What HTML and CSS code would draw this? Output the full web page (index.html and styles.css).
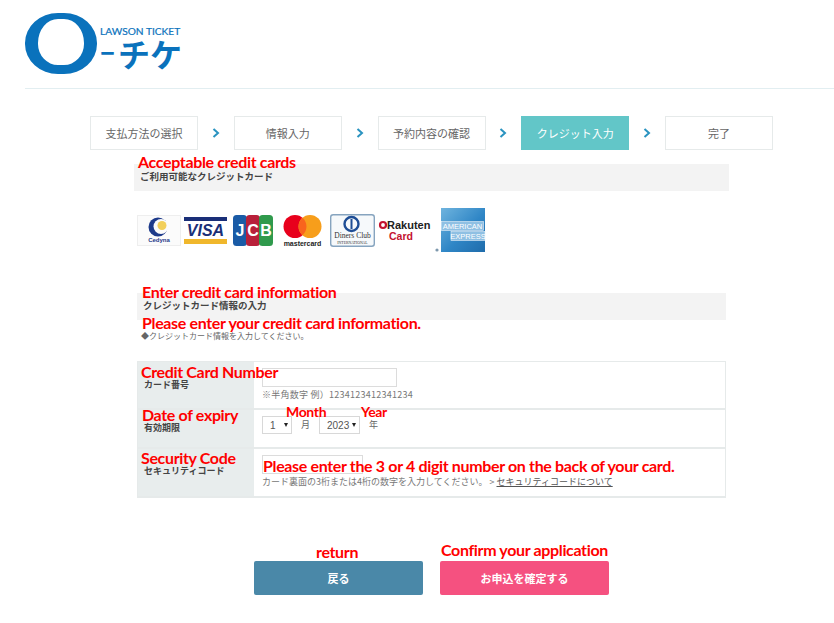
FILE: index.html
```html
<!DOCTYPE html>
<html>
<head>
  <meta charset="utf-8">
  <title>クレジット入力</title>
  <link rel="stylesheet" href="styles.css">
</head>
<body>
  <header class="header">
    <div class="logo">
      <div class="logo-ring"></div>
      <div class="logo-words">
        <div class="logo-en">LAWSON TICKET</div>
        <div class="logo-jp"><span class="logo-dash">ー</span>チケ</div>
      </div>
    </div>
  </header>

  <ol class="steps">
    <li class="step">支払方法の選択</li>
    <li class="arrow"><svg width="8" height="10" viewBox="0 0 8 10"><polyline points="1.5,1 6,5 1.5,9" /></svg></li>
    <li class="step">情報入力</li>
    <li class="arrow"><svg width="8" height="10" viewBox="0 0 8 10"><polyline points="1.5,1 6,5 1.5,9" /></svg></li>
    <li class="step">予約内容の確認</li>
    <li class="arrow"><svg width="8" height="10" viewBox="0 0 8 10"><polyline points="1.5,1 6,5 1.5,9" /></svg></li>
    <li class="step active">クレジット入力</li>
    <li class="arrow"><svg width="8" height="10" viewBox="0 0 8 10"><polyline points="1.5,1 6,5 1.5,9" /></svg></li>
    <li class="step">完了</li>
  </ol>

  <main class="content">
    <h2 class="bar bar-wide">ご利用可能なクレジットカード</h2>

    <svg class="cards" width="350" height="46" viewBox="0 0 350 46">
      <defs>
        <linearGradient id="amexFill" x1="0" y1="0" x2="1" y2="1">
          <stop offset="0" stop-color="#6fb4de" />
          <stop offset="0.55" stop-color="#2f86c6" />
          <stop offset="1" stop-color="#1f6cab" />
        </linearGradient>
      </defs>
      <!-- Cedyna -->
      <rect x="0.5" y="7.5" width="43" height="30" fill="#fbfbfb" stroke="#eeeeee" />
      <circle cx="21" cy="19" r="9.5" fill="#1d3a8a" />
      <circle cx="24" cy="18.5" r="7.5" fill="#fbfbfb" />
      <circle cx="25" cy="17.5" r="4.5" fill="#f2cf5a" />
      <text x="22" y="34" class="c-cedyna">Cedyna</text>
      <!-- VISA -->
      <rect x="47" y="9" width="43" height="4" fill="#1a2f78" />
      <rect x="47" y="31" width="43" height="5" fill="#f0b72c" />
      <text x="68.5" y="28" class="c-visa">VISA</text>
      <!-- JCB -->
      <rect x="96" y="7" width="14" height="31" rx="3.5" fill="#1a5ba6" />
      <rect x="109" y="7" width="14" height="31" rx="3.5" fill="#b8203a" />
      <rect x="122" y="7" width="14" height="31" rx="3.5" fill="#2f9a4c" />
      <text x="103" y="28" class="c-jcb">J</text>
      <text x="116" y="28" class="c-jcb">C</text>
      <text x="129" y="28" class="c-jcb">B</text>
      <!-- mastercard -->
      <circle cx="158" cy="18.5" r="11.5" fill="#e8001c" />
      <circle cx="173" cy="18.5" r="11.5" fill="#f79e1b" />
      <path d="M165.5 9.8 a11.5 11.5 0 0 1 0 17.4 a11.5 11.5 0 0 1 0 -17.4z" fill="#f9641d" />
      <text x="165.5" y="38" class="c-mc">mastercard</text>
      <!-- Diners -->
      <rect x="193.7" y="6.7" width="43.6" height="31.6" rx="2.5" fill="#f6f9fb" stroke="#86a4bf" stroke-width="1.4" />
      <circle cx="214.5" cy="16" r="7" fill="none" stroke="#1f4e96" stroke-width="2.4" />
      <rect x="213.5" y="11" width="2" height="10" fill="#1f4e96" />
      <text x="215.5" y="30" class="c-diners">Diners Club</text>
      <text x="215.5" y="35.5" class="c-diners-sub">INTERNATIONAL</text>
      <!-- Rakuten -->
      <circle cx="246" cy="17" r="3" fill="none" stroke="#c4122f" stroke-width="2.2" />
      <text x="250" y="21" class="c-rakuten">Rakuten</text>
      <text x="252" y="32" class="c-card">Card</text>
      <!-- AMEX -->
      <rect x="304" y="0" width="44" height="44" fill="url(#amexFill)" />
      <rect x="304.5" y="13.5" width="42" height="9" fill="#8fc0e3" stroke="#e6f1f9" stroke-width="0.6" />
      <rect x="314" y="23.5" width="34" height="9" fill="#8fc0e3" stroke="#e6f1f9" stroke-width="0.6" />
      <text x="325.5" y="21" class="c-amex">AMERICAN</text>
      <text x="331" y="31" class="c-amex">EXPRESS</text>
      <circle cx="300" cy="42" r="1.6" fill="#7d98ad" />
    </svg>

    <h2 class="bar bar-info">クレジットカード情報の入力</h2>
    <p class="lead">◆クレジットカード情報を入力してください。</p>

    <div class="form-table">
      <div class="row row-number">
        <div class="label">カード番号</div>
        <div class="field">
          <input class="input input-number" type="text">
          <div class="hint hint-sample">※半角数字 例）1234123412341234</div>
        </div>
      </div>
      <div class="row row-date">
        <div class="label">有効期限</div>
        <div class="field field-date">
          <span class="pick pick-month"><select><option>1</option></select></span>
          <span class="unit">月</span>
          <span class="pick pick-year"><select><option>2023</option></select></span>
          <span class="unit">年</span>
        </div>
      </div>
      <div class="row row-code">
        <div class="label">セキュリティコード</div>
        <div class="field">
          <input class="input input-code" type="text">
          <div class="hint">カード裏面の3桁または4桁の数字を入力してください。 &gt; <a class="hint-link" href="#">セキュリティコードについて</a></div>
        </div>
      </div>
    </div>
  </main>

  <div class="buttons">
    <button class="btn btn-back">戻る</button>
    <button class="btn btn-confirm">お申込を確定する</button>
  </div>

  <!-- red translation notes painted on top of the page -->
  <div class="note n-accept">Acceptable credit cards</div>
  <div class="note n-enter">Enter credit card information</div>
  <div class="note n-please">Please enter your credit card information.</div>
  <div class="note n-number">Credit Card Number</div>
  <div class="note n-expiry">Date of expiry</div>
  <div class="note n-month">Month</div>
  <div class="note n-year">Year</div>
  <div class="note n-code">Security Code</div>
  <div class="note n-digit">Please enter the 3 or 4 digit number on the back of your card.</div>
  <div class="note n-return">return</div>
  <div class="note n-confirm">Confirm your application</div>
</body>
</html>
```

FILE: styles.css
```css
* {
  box-sizing: border-box;
}
body {
  position: relative;
  margin: 0;
  background-color: #fff;
  color: #555;
  font-family: "Noto Sans CJK JP", "Liberation Sans", sans-serif;
  overflow: hidden;
}

/* header */
.header {
  height: 89px;
  margin-left: 25px;
  padding-top: 13px;
  border-bottom: 1px solid #e2eef1;
}
.logo {
  display: flex;
  color: #0a72bc;
}
.logo-ring {
  width: 72px;
  height: 61px;
  border: solid #0a72bc;
  border-width: 6px 13px 9px;
  border-radius: 33px / 30px;
}
.logo-words {
  margin-left: 3px;
  padding-top: 12px;
}
.logo-en {
  font-family: "Lato", sans-serif;
  font-size: 10.2px;
  font-weight: 400;
  line-height: 12px;
  -webkit-text-stroke: 0.2px #0a72bc;
  white-space: nowrap;
}
.logo-jp {
  display: flex;
  align-items: center;
  font-size: 32px;
  font-weight: 700;
  line-height: 32px;
  white-space: nowrap;
}
.logo-dash {
  width: 15px;
  margin-right: 3px;
  overflow: hidden;
  font-size: 15px;
  font-weight: 900;
}

/* steps */
.steps {
  display: flex;
  align-items: center;
  list-style: none;
  margin: 27px 0 0 90px;
  padding: 0;
}
.step {
  display: flex;
  align-items: center;
  justify-content: center;
  width: 108px;
  height: 34px;
  border: 1px solid #e6eaea;
  color: #666;
  font-size: 11px;
}
.step.active {
  background-color: #62c6c8;
  border-color: #62c6c8;
  color: #fff;
}
.arrow {
  display: flex;
  align-items: center;
  justify-content: center;
  width: 35.75px;
}
.arrow polyline {
  fill: none;
  stroke: #2a93c0;
  stroke-width: 2;
}

/* main */
.content {
  width: 589px;
  margin-left: 137px;
}
.bar {
  height: 27px;
  margin: 0;
  padding: 5px 6px 0;
  background-color: #f3f3f3;
  color: #444;
  font-size: 9.5px;
  font-weight: 700;
  line-height: 14px;
}
.bar-wide {
  width: 595px;
  margin: 14px 0 0 -3px;
}
.cards {
  display: block;
  margin-top: 17px;
}
.c-cedyna, .c-visa, .c-jcb, .c-mc, .c-diners, .c-diners-sub, .c-amex {
  text-anchor: middle;
}
.c-cedyna {
  fill: #1d3a8a;
  font: 700 6px "Liberation Sans", sans-serif;
}
.c-visa {
  fill: #1a2f78;
  font: italic 700 16px "Liberation Sans", sans-serif;
}
.c-jcb {
  fill: #fff;
  font: 700 16px "Liberation Sans", sans-serif;
}
.c-mc {
  fill: #222;
  font: 700 7px "Liberation Sans", sans-serif;
}
.c-diners {
  fill: #333;
  font: 7.5px "Liberation Serif", serif;
}
.c-diners-sub {
  fill: #333;
  font: 3.8px "Liberation Serif", serif;
}
.c-rakuten {
  fill: #222;
  font: 700 11px "Liberation Sans", sans-serif;
}
.c-card {
  fill: #c4122f;
  font: 700 10.5px "Liberation Sans", sans-serif;
}
.c-amex {
  fill: #fff;
  font: 400 7.5px "Liberation Sans", sans-serif;
}
.bar-info {
  margin-top: 39px;
}
.lead {
  margin: 10px 0 0 4px;
  color: #666;
  font-size: 8px;
  line-height: 12px;
}

/* form table */
.form-table {
  margin-top: 19px;
  border: 1px solid #e6eaea;
  border-bottom-width: 2px;
}
.row {
  display: flex;
  border-bottom: 2px solid #e6eaea;
}
.row:last-child {
  border-bottom: 0;
}
.row-number {
  height: 48px;
}
.row-date {
  height: 39px;
}
.row-code {
  height: 47px;
}
.label {
  width: 116px;
  padding: 16px 0 0 6px;
  background-color: #e8eded;
  color: #444;
  font-size: 9px;
  font-weight: 700;
  line-height: 14px;
}
.row-date .label {
  padding-top: 11px;
}
.row-code .label {
  padding-top: 15px;
}
.field {
  padding: 6px 8px 0;
}
.field-date {
  display: flex;
  align-items: flex-start;
}
.input {
  display: block;
  height: 19px;
  padding: 0;
  border: 1px solid #dcdcdc;
  background-color: #fff;
}
.input-number {
  width: 135px;
}
.input-code {
  width: 101px;
}
.hint {
  margin-top: 1px;
  color: #777;
  font-size: 9px;
  line-height: 13px;
  white-space: nowrap;
}
.hint-sample {
  letter-spacing: 0.25px;
}
.hint-link {
  color: #555;
}
.pick {
  position: relative;
  display: block;
  height: 18px;
}
.pick::after {
  content: "";
  position: absolute;
  top: 7px;
  right: 4px;
  border-top: 4px solid #222;
  border-left: 2.5px solid transparent;
  border-right: 2.5px solid transparent;
}
.pick-month {
  width: 30px;
}
.pick-year {
  width: 41px;
}
.pick select {
  display: block;
  width: 100%;
  height: 18px;
  padding: 0 0 0 7px;
  border: 1px solid #d8d8d8;
  border-radius: 0;
  background-color: #fff;
  color: #555;
  font-family: "Liberation Sans", sans-serif;
  font-size: 10px;
  appearance: none;
}
.unit {
  width: 27px;
  color: #666;
  font-size: 9px;
  line-height: 18px;
  text-align: center;
}

/* buttons */
.buttons {
  display: flex;
  gap: 17px;
  margin: 63px 0 0 254px;
}
.btn {
  width: 169px;
  height: 34px;
  border: 0;
  border-radius: 2px;
  color: #fff;
  font-family: inherit;
  font-size: 11px;
  font-weight: 700;
  cursor: pointer;
}
.btn-back {
  background-color: #4a88a8;
}
.btn-confirm {
  background-color: #f55180;
}

/* red translation notes */
.note {
  position: absolute;
  color: #f00;
  font-family: "Lato", sans-serif;
  font-size: 16px;
  font-weight: 700;
  line-height: 18px;
  letter-spacing: -0.35px;
  white-space: nowrap;
}
.n-accept {
  top: 153px;
  left: 138px;
}
.n-enter {
  top: 283px;
  left: 142px;
}
.n-please {
  top: 314px;
  left: 142px;
}
.n-number {
  top: 363px;
  left: 141px;
}
.n-expiry {
  top: 406px;
  left: 142px;
}
.n-month {
  top: 403px;
  left: 286px;
  font-size: 14px;
}
.n-year {
  top: 403px;
  left: 361px;
  font-size: 14px;
}
.n-code {
  top: 449px;
  left: 141px;
}
.n-digit {
  top: 457px;
  left: 263px;
}
.n-return {
  top: 543px;
  left: 316px;
}
.n-confirm {
  top: 541px;
  left: 441px;
}
```
